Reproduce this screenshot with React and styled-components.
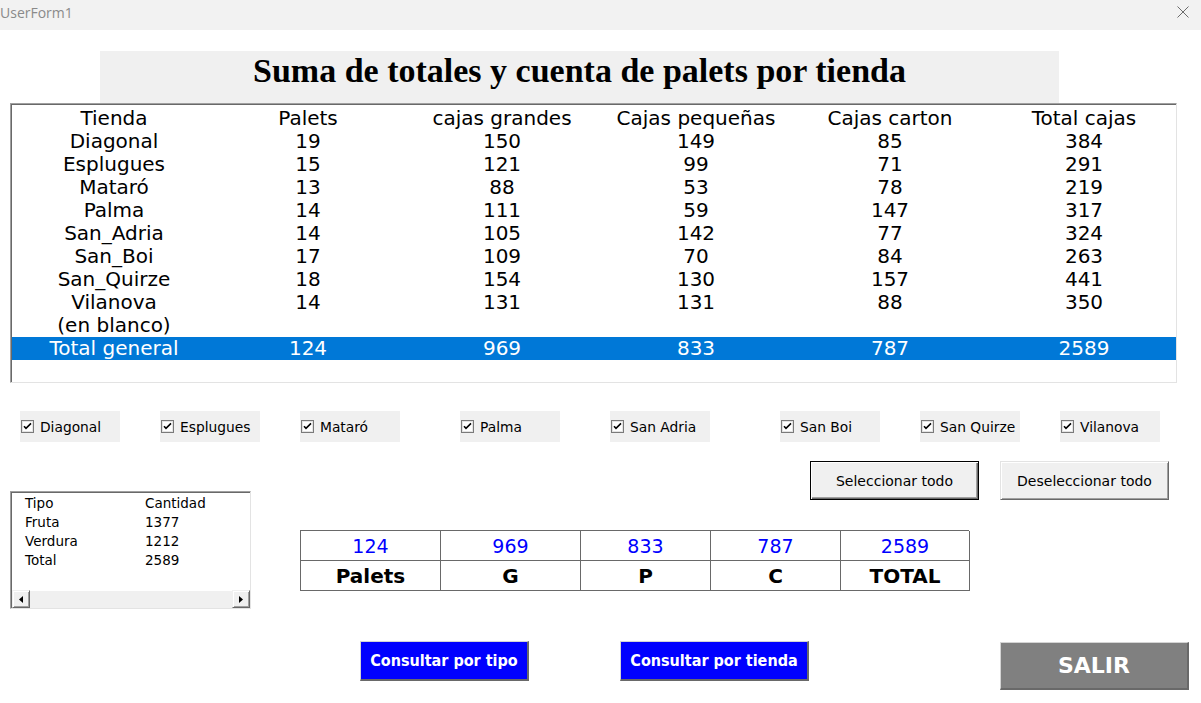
import React from "react";
import styled, { createGlobalStyle, css } from "styled-components";

const GlobalStyle = createGlobalStyle`
  html, body {
    margin: 0;
    padding: 0;
    background: #ffffff;
  }
  body {
    font-family: "DejaVu Sans", sans-serif;
  }
`;

const tiendas = [
  ["Tienda", "Palets", "cajas grandes", "Cajas pequeñas", "Cajas carton", "Total cajas"],
  ["Diagonal", "19", "150", "149", "85", "384"],
  ["Esplugues", "15", "121", "99", "71", "291"],
  ["Mataró", "13", "88", "53", "78", "219"],
  ["Palma", "14", "111", "59", "147", "317"],
  ["San_Adria", "14", "105", "142", "77", "324"],
  ["San_Boi", "17", "109", "70", "84", "263"],
  ["San_Quirze", "18", "154", "130", "157", "441"],
  ["Vilanova", "14", "131", "131", "88", "350"],
  ["(en blanco)", "", "", "", "", ""],
  ["Total general", "124", "969", "833", "787", "2589"],
];

const checks = [
  { label: "Diagonal", offset: 20 },
  { label: "Esplugues", offset: 40 },
  { label: "Mataró", offset: 40 },
  { label: "Palma", offset: 60 },
  { label: "San Adria", offset: 50 },
  { label: "San Boi", offset: 70 },
  { label: "San Quirze", offset: 40 },
  { label: "Vilanova", offset: 40 },
];

const tipos = [
  ["Tipo", "Cantidad"],
  ["Fruta", "1377"],
  ["Verdura", "1212"],
  ["Total", "2589"],
];

const resumen = [
  { value: "124", label: "Palets", width: 140 },
  { value: "969", label: "G", width: 140 },
  { value: "833", label: "P", width: 130 },
  { value: "787", label: "C", width: 130 },
  { value: "2589", label: "TOTAL", width: 129 },
];

const Window = styled.div`
  width: 1201px;
  height: 703px;
  display: flex;
  flex-direction: column;
  overflow: hidden;
  background: #ffffff;
`;

const TitleBar = styled.div`
  height: 30px;
  flex: none;
  display: flex;
  align-items: center;
  justify-content: space-between;
  background: #f2f2f2;
  padding-right: 12px;
`;

const TitleText = styled.span`
  font-family: "Open Sans", "Noto Sans", sans-serif;
  font-size: 14px;
  color: #8a8a8a;
  margin-top: -5px;
`;

const CloseIcon = styled.svg`
  width: 12px;
  height: 12px;
  margin-top: -6px;
`;

const Form = styled.div`
  flex: 1;
  display: flex;
  flex-direction: column;
`;

const Heading = styled.div`
  margin: 21px 0 0 100px;
  width: 959px;
  height: 52px;
  background: #f0f0f0;
  display: flex;
  justify-content: center;
  align-items: flex-start;
  box-sizing: border-box;
  font-family: "Liberation Serif", "Times New Roman", serif;
  font-weight: 700;
  font-size: 34px;
  line-height: 40px;
  color: #000;
`;

const ListBox = styled.div`
  margin-left: 10px;
  width: 1167px;
  height: 280px;
  box-sizing: border-box;
  border-top: 1px solid #a0a0a0;
  border-left: 1px solid #a0a0a0;
  border-right: 1px solid #e3e3e3;
  border-bottom: 1px solid #e3e3e3;
  box-shadow: inset 1px 1px 0 #696969;
  padding-top: 3px;
  padding-left: 1px;
  background: #fff;
  font-family: "DejaVu Sans", sans-serif;
  font-size: 20px;
  color: #000;
`;

const ListRow = styled.div`
  display: grid;
  grid-template-columns: repeat(6, 194px);
  height: 23px;
  line-height: 23px;
  padding-left: 5px;
  ${(p) =>
    p.$selected &&
    css`
      background: #0078d7;
      color: #ffffff;
    `}
`;

const ListCell = styled.span`
  text-align: center;
  white-space: nowrap;
`;

const CheckRow = styled.div`
  margin-top: 28px;
  height: 31px;
  display: flex;
`;

const CheckItem = styled.label`
  margin-left: ${(p) => p.$offset}px;
  width: 100px;
  height: 31px;
  flex: none;
  display: flex;
  align-items: center;
  gap: 6px;
  padding-left: 1px;
  box-sizing: border-box;
  background: #f0f0f0;
  font-family: "DejaVu Sans", Tahoma, sans-serif;
  font-size: 13.8px;
  color: #000;
`;

const CheckBox = styled.svg`
  width: 13px;
  height: 13px;
  flex: none;
`;

const Lower = styled.div`
  display: flex;
  padding-left: 10px;
`;

const TypeList = styled.div`
  margin-top: 49px;
  width: 241px;
  height: 118px;
  box-sizing: border-box;
  border-top: 1px solid #a0a0a0;
  border-left: 1px solid #a0a0a0;
  border-right: 1px solid #e3e3e3;
  border-bottom: 1px solid #e3e3e3;
  box-shadow: inset 1px 1px 0 #696969;
  padding: 1px 0 0 1px;
  display: flex;
  flex-direction: column;
  background: #fff;
  font-family: "DejaVu Sans", Tahoma, sans-serif;
  font-size: 13.5px;
  color: #000;
`;

const TypeRows = styled.div`
  flex: 1;
  padding: 1px 0 0 13px;
`;

const TypeRow = styled.div`
  display: grid;
  grid-template-columns: 120px 100px;
  height: 19px;
  line-height: 19px;
`;

const ScrollBar = styled.div`
  height: 18px;
  display: flex;
  background: #f0f0f0;
`;

const ScrollButton = styled.div`
  width: 18px;
  height: 18px;
  box-sizing: border-box;
  border-top: 1px solid #f0f0f0;
  border-left: 1px solid #f0f0f0;
  border-right: 1px solid #696969;
  border-bottom: 1px solid #696969;
  box-shadow: inset 1px 1px 0 #ffffff, inset -1px -1px 0 #a0a0a0;
  display: flex;
  align-items: center;
  justify-content: center;
  background: #f0f0f0;
`;

const ScrollTrack = styled.div`
  flex: 1;
  background: #f0f0f0;
  border-top: 1px solid #ffffff;
  box-sizing: border-box;
`;

const RightColumn = styled.div`
  margin-left: 49px;
  display: flex;
  flex-direction: column;
`;

const SelectRow = styled.div`
  margin-top: 19px;
  padding-left: 510px;
  display: flex;
  gap: 21px;
`;

const PlainButton = styled.button`
  width: 169px;
  height: 39px;
  box-sizing: border-box;
  padding: 0;
  background: #f0f0f0;
  font-family: "DejaVu Sans", Tahoma, sans-serif;
  font-size: 14px;
  color: #000;
  border-style: solid;
  border-width: 1px;
  ${(p) =>
    p.$default
      ? css`
          border-color: #000;
          box-shadow: inset 1px 1px 0 #ffffff, inset -1px -1px 0 #696969,
            inset -2px -2px 0 #a0a0a0;
        `
      : css`
          border-color: #e3e3e3 #696969 #696969 #e3e3e3;
          box-shadow: inset 1px 1px 0 #ffffff, inset -1px -1px 0 #a0a0a0;
        `}
`;

const Summary = styled.div`
  margin-top: 30px;
  width: 669px;
  display: grid;
  grid-template-columns: ${(p) => p.$cols};
  border-top: 1px solid #696969;
  border-left: 1px solid #696969;
  box-sizing: border-box;
`;

const SummaryCell = styled.div`
  height: 30px;
  box-sizing: border-box;
  border-right: 1px solid #696969;
  border-bottom: 1px solid #696969;
  display: flex;
  align-items: center;
  justify-content: center;
  font-family: "DejaVu Sans", Tahoma, sans-serif;
  ${(p) =>
    p.$head
      ? css`
          font-size: 20px;
          font-weight: 700;
          color: #000;
        `
      : css`
          font-size: 19px;
          color: #0000ff;
        `}
`;

const ActionRow = styled.div`
  margin-top: 50px;
  display: flex;
  align-items: flex-start;
`;

const ActionButton = styled.button`
  margin-left: ${(p) => p.$offset}px;
  margin-top: ${(p) => p.$top || 0}px;
  width: ${(p) => p.$width}px;
  height: ${(p) => p.$height}px;
  box-sizing: border-box;
  padding: 0;
  border-style: solid;
  border-width: 1px 2px 2px 1px;
  border-color: #d4d4d4 #696969 #696969 #d4d4d4;
  background: ${(p) => p.$bg};
  color: #ffffff;
  font-family: ${(p) =>
    p.$wide ? `"DejaVu Sans", sans-serif` : `"DejaVu Sans Condensed", "DejaVu Sans", sans-serif`};
  font-stretch: ${(p) => (p.$wide ? "normal" : "condensed")};
  font-weight: 700;
  font-size: ${(p) => p.$size}px;
  white-space: nowrap;
`;

function Check({ label, offset }) {
  return (
    <CheckItem $offset={offset}>
      <CheckBox viewBox="0 0 13 13">
        <rect x="0.5" y="0.5" width="12" height="12" fill="#fff" stroke="#7a7a7a" />
        <rect x="1.5" y="1.5" width="10" height="10" fill="none" stroke="#e3e3e3" />
        <path d="M3 6.2 L5 8.4 L10 3.4" fill="none" stroke="#000" strokeWidth="1.6" />
      </CheckBox>
      {label}
    </CheckItem>
  );
}

export default function App() {
  const cols = resumen.map((r) => r.width + "px").join(" ");
  return (
    <Window>
      <GlobalStyle />
      <TitleBar>
        <TitleText>UserForm1</TitleText>
        <CloseIcon viewBox="0 0 12 12">
          <path d="M0.5 0.5 L11.5 11.5 M11.5 0.5 L0.5 11.5" stroke="#6b6b6b" strokeWidth="1" />
        </CloseIcon>
      </TitleBar>
      <Form>
        <Heading>Suma de totales y cuenta de palets por tienda</Heading>
        <ListBox>
          {tiendas.map((row, i) => (
            <ListRow key={i} $selected={i === tiendas.length - 1}>
              {row.map((c, j) => (
                <ListCell key={j}>{c}</ListCell>
              ))}
            </ListRow>
          ))}
        </ListBox>
        <CheckRow>
          {checks.map((c) => (
            <Check key={c.label} label={c.label} offset={c.offset} />
          ))}
        </CheckRow>
        <Lower>
          <TypeList>
            <TypeRows>
              {tipos.map((t) => (
                <TypeRow key={t[0]}>
                  <span>{t[0]}</span>
                  <span>{t[1]}</span>
                </TypeRow>
              ))}
            </TypeRows>
            <ScrollBar>
              <ScrollButton>
                <svg width="4" height="7" viewBox="0 0 4 7">
                  <path d="M4 0 L0 3.5 L4 7 Z" fill="#000" />
                </svg>
              </ScrollButton>
              <ScrollTrack />
              <ScrollButton>
                <svg width="4" height="7" viewBox="0 0 4 7">
                  <path d="M0 0 L4 3.5 L0 7 Z" fill="#000" />
                </svg>
              </ScrollButton>
            </ScrollBar>
          </TypeList>
          <RightColumn>
            <SelectRow>
              <PlainButton $default>Seleccionar todo</PlainButton>
              <PlainButton>Deseleccionar todo</PlainButton>
            </SelectRow>
            <Summary $cols={cols}>
              {resumen.map((r) => (
                <SummaryCell key={"v" + r.label}>{r.value}</SummaryCell>
              ))}
              {resumen.map((r) => (
                <SummaryCell key={"l" + r.label} $head>
                  {r.label}
                </SummaryCell>
              ))}
            </Summary>
            <ActionRow>
              <ActionButton $offset={60} $width={169} $height={40} $bg="#0000ff" $size={16}>
                Consultar por tipo
              </ActionButton>
              <ActionButton $offset={91} $width={189} $height={40} $bg="#0000ff" $size={16}>
                Consultar por tienda
              </ActionButton>
              <ActionButton $offset={191} $top={1} $width={189} $height={48} $bg="#808080" $size={22} $wide>
                SALIR
              </ActionButton>
            </ActionRow>
          </RightColumn>
        </Lower>
      </Form>
    </Window>
  );
}
